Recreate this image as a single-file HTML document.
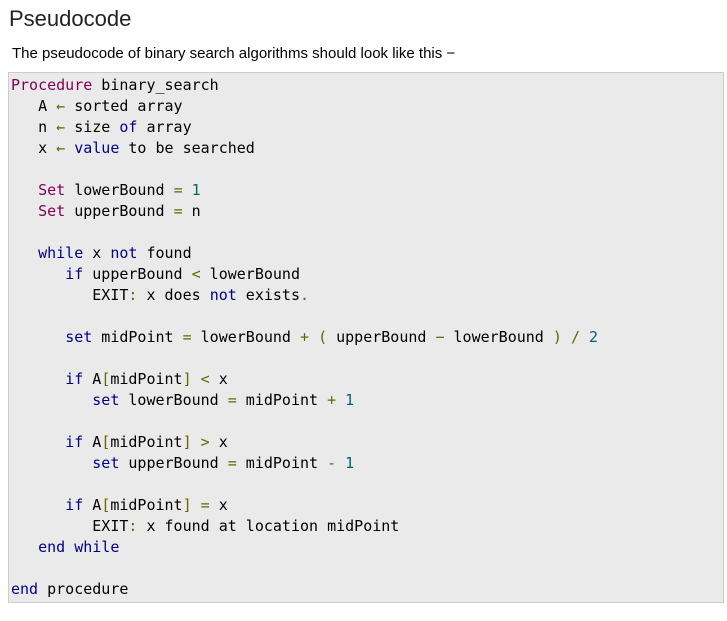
<!DOCTYPE html>
<html><head><style>
body{margin:0;background:#fff;font-family:"Liberation Sans",Arial,sans-serif;color:#000;}
h2{position:absolute;left:9px;top:4px;margin:0;font-size:22px;font-weight:normal;color:#222;line-height:30px;}
p{position:absolute;left:12px;top:44px;margin:0;font-size:15px;line-height:20px;}
pre{position:absolute;left:8px;top:72px;width:716px;height:531px;margin:0;box-sizing:border-box;background:#eaeaea;border:1px solid #ccc;padding:2px 0 0 2px;font-family:"DejaVu Sans Mono",monospace;font-size:15px;line-height:21px;color:#000;}
.p{color:#7f0055}.k{color:#000088}.o{color:#666600}.n{color:#006666}
</style></head><body>
<h2>Pseudocode</h2>
<p>The pseudocode of binary search algorithms should look like this −</p>
<pre><span class="p">Procedure</span> binary_search
   A <span class="o">←</span> sorted array
   n <span class="o">←</span> size <span class="k">of</span> array
   x <span class="o">←</span> <span class="k">value</span> to be searched

   <span class="p">Set</span> lowerBound <span class="o">=</span> <span class="n">1</span>
   <span class="p">Set</span> upperBound <span class="o">=</span> n 

   <span class="k">while</span> x <span class="k">not</span> found
      <span class="k">if</span> upperBound <span class="o">&lt;</span> lowerBound 
         EXIT<span class="o">:</span> x does <span class="k">not</span> exists<span class="o">.</span>
   
      <span class="k">set</span> midPoint <span class="o">=</span> lowerBound <span class="o">+</span> <span class="o">(</span> upperBound <span class="o">−</span> lowerBound <span class="o">)</span> <span class="o">/</span> <span class="n">2</span>
      
      <span class="k">if</span> A<span class="o">[</span>midPoint<span class="o">]</span> <span class="o">&lt;</span> x
         <span class="k">set</span> lowerBound <span class="o">=</span> midPoint <span class="o">+</span> <span class="n">1</span>
         
      <span class="k">if</span> A<span class="o">[</span>midPoint<span class="o">]</span> <span class="o">&gt;</span> x
         <span class="k">set</span> upperBound <span class="o">=</span> midPoint <span class="o">-</span> <span class="n">1</span> 

      <span class="k">if</span> A<span class="o">[</span>midPoint<span class="o">]</span> <span class="o">=</span> x 
         EXIT<span class="o">:</span> x found at location midPoint
   <span class="k">end</span> <span class="k">while</span>
   
<span class="k">end</span> procedure</pre>
</body></html>
